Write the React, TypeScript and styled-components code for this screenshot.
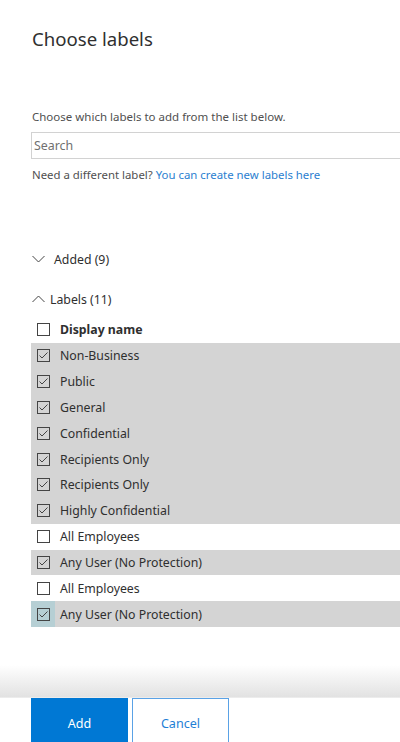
import styled, { createGlobalStyle } from "styled-components";

const GlobalStyle = createGlobalStyle`
  html, body {
    margin: 0;
    padding: 0;
    background: #fff;
  }
  body {
    font-family: "Noto Sans", "Open Sans", "Liberation Sans", sans-serif;
    color: #333;
  }
`;

const Page = styled.div`
  height: 100vh;
  display: flex;
  flex-direction: column;
  overflow: hidden;
`;

const Content = styled.div`
  flex: 1;
  padding-left: 31px;
  overflow: hidden;
`;

const Title = styled.h1`
  margin: 25px 0 0 1px;
  font-size: 18.6px;
  line-height: 28px;
  font-weight: 400;
  color: #2f2f2f;
`;

const Hint = styled.p`
  margin: 56px 0 0 1px;
  font-size: 11.5px;
  line-height: 16px;
  color: #505050;
`;

const SearchBox = styled.input`
  display: block;
  box-sizing: border-box;
  width: 420px;
  height: 27px;
  margin: 7px 0 0;
  padding: 0 2px;
  border: 1px solid #d2d2d2;
  font-family: inherit;
  font-size: 12.4px;
  color: #333;
  outline: none;
  &::placeholder {
    color: #707070;
  }
`;

const Help = styled.p`
  margin: 8px 0 0 1px;
  font-size: 11.4px;
  line-height: 16px;
  color: #505050;
`;

const Link = styled.a`
  color: #2b80d0;
  text-decoration: none;
`;

const Section = styled.div<{ $gap: number }>`
  display: flex;
  align-items: center;
  margin-top: ${(p) => p.$gap}px;
  height: 20px;
  font-size: 12.3px;
  color: #2f2f2f;
`;

const Chevron = styled.svg<{ $space: number }>`
  width: 13px;
  height: 8px;
  margin-left: 1px;
  margin-right: ${(p) => p.$space}px;
  flex-shrink: 0;
`;

const Table = styled.div`
  margin-top: 8px;
`;

const Row = styled.div<{ $selected?: boolean }>`
  display: grid;
  grid-template-columns: 24px 1fr;
  height: 25.85px;
  align-items: stretch;
  background: ${(p) => (p.$selected ? "#d4d4d4" : "transparent")};
  font-size: 12.3px;
  color: #2f2f2f;
`;

const CheckCell = styled.div<{ $focus?: boolean }>`
  display: flex;
  align-items: center;
  justify-content: center;
  padding-left: 1px;
  background: ${(p) => (p.$focus ? "#b6cfd4" : "transparent")};
`;

const Box = styled.span`
  box-sizing: border-box;
  width: 13px;
  height: 13px;
  border: 1px solid #444;
  display: flex;
  align-items: center;
  justify-content: center;
`;

const Label = styled.div<{ $bold?: boolean }>`
  display: flex;
  align-items: center;
  padding-left: 5px;
  font-weight: ${(p) => (p.$bold ? 700 : 400)};
`;

const Footer = styled.div`
  flex-shrink: 0;
  height: 77px;
  display: flex;
  flex-direction: column;
`;

const Shade = styled.div`
  height: 32px;
  background: linear-gradient(to bottom, rgba(255, 255, 255, 0), #e2e2e2);
  border-bottom: 1px solid #ececec;
`;

const Buttons = styled.div`
  display: flex;
  gap: 4px;
  padding-left: 31px;
  height: 44px;
  align-items: flex-start;
`;

const Button = styled.button<{ $primary?: boolean }>`
  box-sizing: border-box;
  width: 97px;
  height: 52px;
  padding: 0 0 2px;
  font-family: inherit;
  font-size: 12.6px;
  border: 1px solid ${(p) => (p.$primary ? "#0078d4" : "#5aa2e6")};
  background: ${(p) => (p.$primary ? "#0078d4" : "#fff")};
  color: ${(p) => (p.$primary ? "#fff" : "#1f7fd6")};
`;

const Check = () => (
  <svg width="9" height="7" viewBox="0 0 9 7">
    <polyline points="0.5,3.5 3,6 8.5,0.5" fill="none" stroke="#444" strokeWidth="1" />
  </svg>
);

const labels = [
  { name: "Non-Business", on: true },
  { name: "Public", on: true },
  { name: "General", on: true },
  { name: "Confidential", on: true },
  { name: "Recipients Only", on: true },
  { name: "Recipients Only", on: true },
  { name: "Highly Confidential", on: true },
  { name: "All Employees", on: false },
  { name: "Any User (No Protection)", on: true },
  { name: "All Employees", on: false },
  { name: "Any User (No Protection)", on: true, focus: true },
];

export default function App() {
  return (
    <Page>
      <GlobalStyle />
      <Content>
        <Title>Choose labels</Title>
        <Hint>Choose which labels to add from the list below.</Hint>
        <SearchBox placeholder="Search" />
        <Help>
          Need a different label? <Link href="#">You can create new labels here</Link>
        </Help>

        <Section $gap={66}>
          <Chevron $space={9} viewBox="0 0 13 8">
            <polyline points="0.5,1 6.5,7 12.5,1" fill="none" stroke="#444" strokeWidth="1" />
          </Chevron>
          Added (9)
        </Section>
        <Section $gap={20}>
          <Chevron $space={5} viewBox="0 0 13 8">
            <polyline points="0.5,7 6.5,1 12.5,7" fill="none" stroke="#444" strokeWidth="1" />
          </Chevron>
          Labels (11)
        </Section>

        <Table>
          <Row>
            <CheckCell>
              <Box />
            </CheckCell>
            <Label $bold>Display name</Label>
          </Row>
          {labels.map((l, i) => (
            <Row key={i} $selected={l.on}>
              <CheckCell $focus={l.focus}>
                <Box>{l.on && <Check />}</Box>
              </CheckCell>
              <Label>{l.name}</Label>
            </Row>
          ))}
        </Table>
      </Content>
      <Footer>
        <Shade />
        <Buttons>
          <Button $primary>Add</Button>
          <Button>Cancel</Button>
        </Buttons>
      </Footer>
    </Page>
  );
}
